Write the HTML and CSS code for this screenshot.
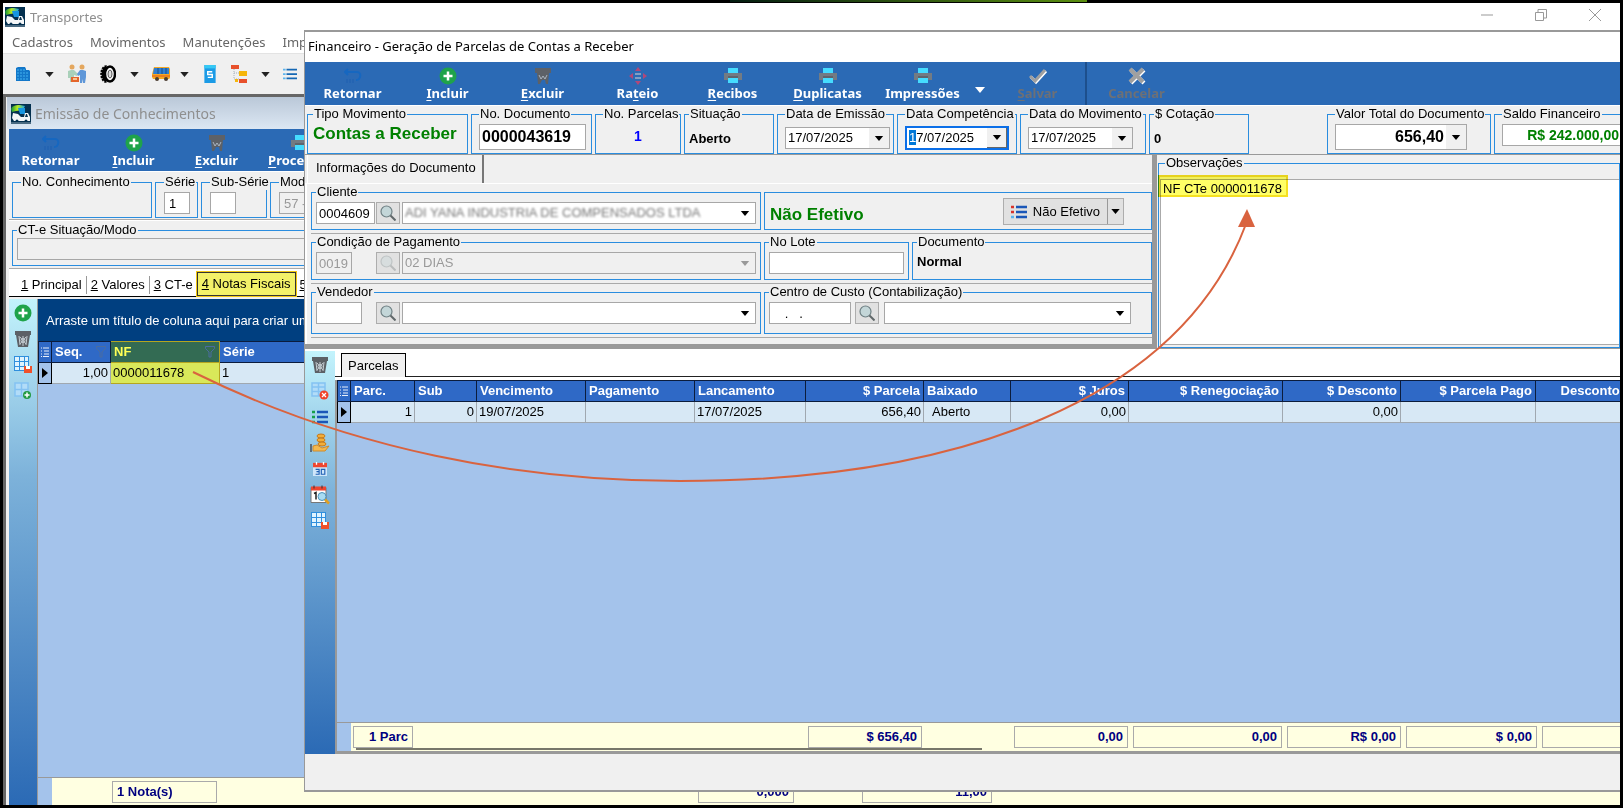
FILE: index.html
```html
<!DOCTYPE html>
<html lang="pt-BR">
<head>
<meta charset="utf-8">
<title>Transportes</title>
<link rel="stylesheet" href="styles.css">
</head>
<body>
<svg class="sprite" aria-hidden="true">
  <defs>
    <linearGradient id="globe" x1="0" y1="0" x2="1" y2="0"><stop offset="0" stop-color="#0a8f3c"/><stop offset=".45" stop-color="#b7ea1f"/><stop offset="1" stop-color="#16a3e8"/></linearGradient>
  </defs>
  <symbol id="i-app" viewBox="0 0 20 20"><rect width="20" height="20" fill="#04304f"/><path d="M0 5C1 2 4 1 9 1l5 1-2 4-7 1-4 1z" fill="url(#globe)"/><path d="M7 4h7v6H9z" fill="#1694e0"/><path d="M2 9l5 1 3 3h3l1-4h3l2 4v4H3l-2-3z" fill="#f4f6f8"/><path d="M15 10h1l1 3h-3z" fill="#04304f"/><circle cx="6" cy="17" r="1.500" fill="#04304f"/><circle cx="15" cy="17" r="1.500" fill="#04304f"/><path d="M0 19h20" stroke="#8fa3b3"/></symbol>
  <symbol id="i-caret" viewBox="0 0 10 6"><path d="M0 0h10L5 6z" fill="currentColor"/></symbol>
  <symbol id="i-building" viewBox="0 0 16 16"><path d="M1 2l2-1h7l1 2v1h3l1 1v10H1z" fill="#1377c9"/><path d="M2 4h8M2 7h12M2 10h12M2 13h12" stroke="#45b4f0" stroke-dasharray="2 1"/></symbol>
  <symbol id="i-people" viewBox="0 0 20 20"><circle cx="5" cy="3" r="2.500" fill="#e4a75e"/><circle cx="15" cy="3" r="2.500" fill="#e4a75e"/><path d="M1 14V7l3-1h3l4 4-1 2-3-1v7H3v-4z" fill="#a9d0b9"/><path d="M19 13V7l-3-1h-3l-3 4 1 2 2-1v8h2v-4l1 4h2z" fill="#5f97d8"/><rect x="4" y="13" width="8" height="5" fill="#e4652a"/><rect x="6" y="14" width="4" height="2" fill="#f7c48f"/></symbol>
  <symbol id="i-tire" viewBox="0 0 16 18"><ellipse cx="6" cy="9" rx="4.500" ry="7.500" fill="#000" stroke="#000" stroke-width="2.500" stroke-dasharray="2 1"/><ellipse cx="10" cy="9" rx="5" ry="7.500" fill="#fff" stroke="#000" stroke-width="2.500"/><ellipse cx="10" cy="9" rx="2" ry="4" fill="#ddd" stroke="#555"/></symbol>
  <symbol id="i-bus" viewBox="0 0 18 16"><path d="M2 1h15l1 2v9l-1 1H1l-1-2V8z" fill="#f6a821"/><path d="M2 2h15v6H1z" fill="#2f7ed0"/><path d="M6 2v6M10 2v6M14 2v6" stroke="#1b4c86"/><path d="M0 10h18" stroke="#e05a1c"/><circle cx="5" cy="13" r="2" fill="#4b3d30"/><circle cx="14" cy="13" r="2" fill="#4b3d30"/></symbol>
  <symbol id="i-phone" viewBox="0 0 10 16"><rect width="10" height="16" fill="#1b9be6"/><path d="M0 0h10v3H0z" fill="#36c8f4"/><path d="M7 6H3v2.500h4V11H3" fill="none" stroke="#fff" stroke-width="1.300"/></symbol>
  <symbol id="i-org" viewBox="0 0 16 18"><path d="M0 0h8v4H0z" fill="#e8512c"/><path d="M3 4v10h5M3 8h5" fill="none" stroke="#a9b2bb" stroke-dasharray="1 1"/><path d="M8 6h8v5H8z" fill="#f6b60c"/><path d="M4 14h3v3H4z" fill="#f6b60c"/><path d="M8 14h8v4H8z" fill="#e8512c"/></symbol>
  <symbol id="i-list" viewBox="0 0 16 14"><path d="M0 2h3M0 7h3M0 12h3" stroke="#5cb4ee" stroke-width="2"/><path d="M4 2h12M4 7h12M4 12h12" stroke="#1668b4" stroke-width="2"/></symbol>
  <symbol id="i-glist" viewBox="0 0 16 14"><path d="M0 2h3M0 7h3M0 12h3" stroke="#16a04a" stroke-width="2.500"/><path d="M5 2h11M5 7h11M5 12h11" stroke="#1a57b8" stroke-width="2.500"/></symbol>
  <symbol id="i-rlist" viewBox="0 0 16 14"><path d="M0 2h3M0 7h3" stroke="#d8322a" stroke-width="2.500"/><path d="M0 12h3" stroke="#5cb4ee" stroke-width="2.500"/><path d="M5 2h11M5 7h11M5 12h11" stroke="#1a57b8" stroke-width="2.500"/></symbol>
  <symbol id="i-back" viewBox="0 0 18 16"><path d="M4 1L1 4l3 3M2 4h11c5 0 4 8-1 8" fill="none" stroke="#1667c0" stroke-width="2"/><path d="M3 11v4M6 11v4M9 11v4" stroke="#1e5fb0"/></symbol>
  <symbol id="i-plus" viewBox="0 0 18 18"><circle cx="9" cy="9" r="8.500" fill="#1fa34a"/><path d="M9 4.500v9M4.500 9h9" stroke="#fff" stroke-width="2.500"/></symbol>
  <symbol id="i-trash" viewBox="0 0 18 18"><path d="M1 1h16v4h-1l-2 12H4L2 5H1z" fill="#5c6066"/><path d="M5 6l1 9M13 6l-1 9M6 7l6 7M12 7l-6 7M9 6v10" stroke="#c5cdd3"/><circle cx="9" cy="10.500" r="2" fill="none" stroke="#c5cdd3"/></symbol>
  <symbol id="i-trashd" viewBox="0 0 18 18"><path d="M1 1h16v5h-2l-1 11h-2l-1-4H8l-2 4H4L3 6H1z" fill="#5d6167"/><path d="M5 8l2 4 2-3 2 3 2-4" fill="none" stroke="#a9b4c0"/></symbol>
  <symbol id="i-move" viewBox="0 0 18 18"><path d="M9 0l3 4H6zM9 18l3-4H6zM0 9l4-3v6zM18 9l-4-3v6z" fill="#b0487a"/><path d="M6 7h6M6 11h6" stroke="#9fb0c9" stroke-width="1.500"/></symbol>
  <symbol id="i-printer" viewBox="0 0 18 16"><path d="M4 0h10v5H4z" fill="#45dcff"/><path d="M0 5h18v7H0z" fill="#737b83"/><path d="M4 10h10v5H4z" fill="#45dcff"/><path d="M4 9h10" stroke="#4a5158"/></symbol>
  <symbol id="i-check" viewBox="0 0 18 16"><path d="M2 9l5 5L17 3" fill="none" stroke="#fff" stroke-width="3"/><path d="M1 8l5 5L16 2" fill="none" stroke="#a0a0a0" stroke-width="3"/></symbol>
  <symbol id="i-cross" viewBox="0 0 18 18"><path d="M3 3l13 13M16 3L3 16" stroke="#fff" stroke-width="4"/><path d="M2 2l13 13M15 2L2 15" stroke="#a0a0a0" stroke-width="4"/></symbol>
  <symbol id="i-grid-save" viewBox="0 0 18 18"><path d="M0 0h15v15H0z" fill="#2f8fdd"/><path d="M1 1h4v4H1zM6 1h4v4H6zM11 1h3v4h-3zM1 6h4v4H1zM6 6h4v4H6zM11 6h3v4h-3zM1 11h4v3H1zM6 11h4v3H6z" fill="#dff3ff"/><path d="M10 10h8v7h-8z" fill="#f0502a"/><path d="M12 10h4v3h-4z" fill="#fff"/></symbol>
  <symbol id="i-grid-plus" viewBox="0 0 18 18"><path d="M1 1h13v13H1zM7.500 1v13M1 7.500h13" fill="#b2dcf8" stroke="#84c2f2" stroke-width="1.500"/><circle cx="13" cy="13" r="4" fill="#239a43"/><path d="M13 10.500v5M10.500 13h5" stroke="#fff" stroke-width="1.500"/></symbol>
  <symbol id="i-grid-x" viewBox="0 0 18 18"><path d="M1 1h13v13H1zM7.500 1v13M1 5h13M1 9.500h13" fill="#b2dcf8" stroke="#84c2f2" stroke-width="1.500"/><circle cx="13" cy="13" r="4.500" fill="#f0432a"/><path d="M11 11l4 4M15 11l-4 4" stroke="#fff" stroke-width="1.200"/></symbol>
  <symbol id="i-coins" viewBox="0 0 20 20"><ellipse cx="11" cy="3" rx="4" ry="2" fill="#f2ae38" stroke="#c47a1c"/><ellipse cx="11" cy="7" rx="4" ry="2" fill="#f2ae38" stroke="#c47a1c"/><ellipse cx="12" cy="11" rx="4" ry="2" fill="#f2ae38" stroke="#c47a1c"/><path d="M3 13l4-1 5 3 7-2-4 5H3z" fill="#f4b94e" stroke="#d08a2a"/><path d="M1 11v8" stroke="#5c6c7c" stroke-width="2"/></symbol>
  <symbol id="i-cal" viewBox="0 0 16 16"><path d="M0 2h16v14H0z" fill="#cfe6fa"/><path d="M0 1h16v5H0z" fill="#ee4530"/><path d="M4 0v3M12 0v3" stroke="#fff" stroke-width="1.500"/><path d="M3 8.500h4v2.500H4h3V14H3M9.500 8.500h4V14h-4z" fill="none" stroke="#1f5fb4" stroke-width="1.300"/></symbol>
  <symbol id="i-cal-find" viewBox="0 0 20 19"><path d="M1 2h15v15H1z" fill="#fff" stroke="#777"/><path d="M1 1h15v4H1z" fill="#ee4530"/><path d="M4 0v3M12 0v3" stroke="#333"/><path d="M4 8l2-1v7" fill="none" stroke="#222" stroke-width="1.500"/><circle cx="12" cy="11" r="4" fill="#a9dcf2" stroke="#4b93bd"/><path d="M15 14l4 4" stroke="#e0a020" stroke-width="2.500"/></symbol>
  <symbol id="i-find" viewBox="0 0 16 16"><circle cx="6.500" cy="6.500" r="5.500" fill="#c3d6d8" stroke="#6f8084" stroke-width="1.200"/><path d="M10.500 10.500l5 5" stroke="#60686a" stroke-width="2"/></symbol>
  <symbol id="i-rows" viewBox="0 0 8 10"><path d="M0 1h1M2 1h6M0 4h1M3 4h5M0 7h1M3 7h5M0 9.500h1M2 9.500h6" stroke="#e9f0fb"/></symbol>
  <symbol id="i-filter" viewBox="0 0 10 12"><path d="M.5.5h9v2L6 6v5H4V6L.5 2.500z" fill="none" stroke="currentColor"/></symbol>
  <symbol id="i-current" viewBox="0 0 6 10"><path d="M0 0l6 5-6 5z" fill="#000"/></symbol>
</svg>

<div class="desktop">
  <div class="glow"></div>

  <main class="main-window">
    <header class="titlebar">
      <svg class="ic20"><use href="#i-app"/></svg>
      <span>Transportes</span>
      <div class="win-buttons">
        <button aria-label="Minimizar"><svg width="14" height="14"><path d="M1 7h12" stroke="#999"/></svg></button>
        <button aria-label="Restaurar"><svg width="14" height="14"><path d="M1.500 4.500h8v8h-8zM4 4V1.500h8.500V10H10" fill="none" stroke="#999"/></svg></button>
        <button aria-label="Fechar"><svg width="14" height="14"><path d="M1 1l12 12M13 1L1 13" stroke="#999"/></svg></button>
      </div>
    </header>
    <nav class="menubar"><button>Cadastros</button><button>Movimentos</button><button>Manutenções</button><button>Impressões</button></nav>
    <div class="iconbar">
      <button class="split" aria-label="Empresas"><svg class="ic16"><use href="#i-building"/></svg><svg class="caret"><use href="#i-caret"/></svg></button>
      <button aria-label="Clientes"><svg class="ic20"><use href="#i-people"/></svg></button>
      <button class="split" aria-label="Pneus"><svg class="ic16"><use href="#i-tire"/></svg><svg class="caret"><use href="#i-caret"/></svg></button>
      <button class="split near" aria-label="Veículos"><svg class="ic18"><use href="#i-bus"/></svg><svg class="caret"><use href="#i-caret"/></svg></button>
      <button aria-label="Serviços"><svg class="ic16"><use href="#i-phone"/></svg></button>
      <button class="split" aria-label="Organização"><svg class="ic16"><use href="#i-org"/></svg><svg class="caret"><use href="#i-caret"/></svg></button>
      <button aria-label="Lista"><svg class="ic14"><use href="#i-list"/></svg></button>
    </div>

    <section class="child">
      <header class="child-title"><svg class="ic20"><use href="#i-app"/></svg><span>Emissão de Conhecimentos</span></header>
      <div class="actions compact">
        <button><svg><use href="#i-back"/></svg><span>Retornar</span></button>
        <button><svg><use href="#i-plus"/></svg><span><u>I</u>ncluir</span></button>
        <button><svg><use href="#i-trashd"/></svg><span><u>E</u>xcluir</span></button>
        <button><svg><use href="#i-printer"/></svg><span><u>P</u>rocessar</span></button>
      </div>
      <div class="doc-row">
        <fieldset class="w-conh"><legend>No. Conhecimento</legend></fieldset>
        <fieldset class="w-serie"><legend><label for="serie">Série</label></legend><input id="serie" class="box tiny" value="1"></fieldset>
        <fieldset class="w-sub"><legend><label for="sub">Sub-Série</label></legend><input id="sub" class="box tiny"></fieldset>
        <fieldset class="grow"><legend><label for="mod">Modelo</label></legend><input id="mod" class="box off" value="57 - CT-e" disabled></fieldset>
      </div>
      <div class="doc-row second">
        <fieldset class="grow flush"><legend><label for="sit">CT-e Situação/Modo</label></legend><input id="sit" class="box off fill" disabled></fieldset>
      </div>
      <div class="tabs">
        <button><u>1</u> Principal</button><button><u>2</u> Valores</button><button><u>3</u> CT-e</button><button class="marked"><u>4</u> Notas Fiscais</button><button><u>5</u> Outros</button>
      </div>
      <div class="notes">
        <div class="sidebar">
          <button aria-label="Adicionar"><svg class="ic18"><use href="#i-plus"/></svg></button>
          <button aria-label="Remover"><svg class="ic18"><use href="#i-trash"/></svg></button>
          <button aria-label="Salvar grade"><svg class="ic18"><use href="#i-grid-save"/></svg></button>
          <button aria-label="Adicionar coluna"><svg class="ic18"><use href="#i-grid-plus"/></svg></button>
        </div>
        <div class="grid-area">
          <p class="group-hint">Arraste um título de coluna aqui para criar um grupo</p>
          <table class="grid">
            <colgroup><col class="c-ind"><col class="n-seq"><col class="n-nf"><col class="n-serie"></colgroup>
            <thead><tr><th><svg class="rows"><use href="#i-rows"/></svg></th><th>Seq.<svg class="filter"><use href="#i-filter"/></svg></th><th class="nf-head">NF<svg class="filter"><use href="#i-filter"/></svg></th><th>Série</th></tr></thead>
            <tbody><tr><td class="ind"><svg><use href="#i-current"/></svg></td><td class="num">1,00</td><td class="nf-cell">0000011678</td><td>1</td></tr></tbody>
          </table>
          <div class="canvas"></div>
          <div class="totals notes-totals"><output class="t-notas">1 Nota(s)</output><output class="t-peso">0,000</output><output class="t-valor">11,00</output></div>
        </div>
      </div>
    </section>
  </main>

  <section class="dialog" role="dialog" aria-label="Geração de Parcelas">
    <header class="dialog-title">Financeiro - Geração de Parcelas de Contas a Receber</header>
    <div class="actions">
      <button><svg><use href="#i-back"/></svg><span>Retornar</span></button>
      <button><svg><use href="#i-plus"/></svg><span><u>I</u>ncluir</span></button>
      <button><svg><use href="#i-trashd"/></svg><span><u>E</u>xcluir</span></button>
      <button><svg><use href="#i-move"/></svg><span>Ra<u>t</u>eio</span></button>
      <button><svg><use href="#i-printer"/></svg><span><u>R</u>ecibos</span></button>
      <button><svg><use href="#i-printer"/></svg><span><u>D</u>uplicatas</span></button>
      <button><svg><use href="#i-printer"/></svg><span>Impressões</span></button>
      <button class="drop" aria-label="Mais impressões"><svg><use href="#i-caret"/></svg></button>
      <button disabled><svg><use href="#i-check"/></svg><span><u>S</u>alvar</span></button>
      <button class="divided" disabled><svg><use href="#i-cross"/></svg><span>Cancelar</span></button>
    </div>

    <div class="summary">
      <fieldset class="s-tipo"><legend>Tipo Movimento</legend><strong class="green big">Contas a Receber</strong></fieldset>
      <fieldset class="s-doc"><legend><label for="ndoc">No. Documento</label></legend><input id="ndoc" class="box docno" value="0000043619"></fieldset>
      <fieldset class="s-parc"><legend>No. Parcelas</legend><strong class="blue">1</strong></fieldset>
      <fieldset class="s-sit"><legend>Situação</legend><strong class="low">Aberto</strong></fieldset>
      <fieldset class="s-emi"><legend><label for="emi">Data de Emissão</label></legend><div class="combo date"><input id="emi" value="17/07/2025"><button aria-label="Abrir calendário"><svg><use href="#i-caret"/></svg></button></div></fieldset>
      <fieldset class="s-comp"><legend>Data Competência</legend><div class="combo date focus"><div class="entry" role="textbox" tabindex="0" aria-label="Data Competência"><mark>1</mark>7/07/2025</div><button aria-label="Abrir calendário"><svg><use href="#i-caret"/></svg></button></div></fieldset>
      <fieldset class="s-mov"><legend><label for="mov">Data do Movimento</label></legend><div class="combo date"><input id="mov" value="17/07/2025"><button aria-label="Abrir calendário"><svg><use href="#i-caret"/></svg></button></div></fieldset>
      <fieldset class="s-cot"><legend>$ Cotação</legend><strong class="low">0</strong></fieldset>
      <fieldset class="s-total"><legend><label for="tot">Valor Total do Documento</label></legend><div class="combo total"><input id="tot" value="656,40"><button aria-label="Abrir calculadora"><svg><use href="#i-caret"/></svg></button></div></fieldset>
      <fieldset class="s-saldo"><legend><label for="saldo">Saldo Financeiro</label></legend><input id="saldo" class="box saldo" value="R$ 242.000,00"></fieldset>
    </div>

    <div class="details">
      <div class="info">
        <div class="info-tab"><button>Informações do Documento</button></div>
        <div class="info-body">
          <div class="info-row">
            <fieldset class="f-main"><legend><label for="cli">Cliente</label></legend>
              <input id="cli" class="box code" value="0004609"><button class="find" aria-label="Buscar cliente"><svg><use href="#i-find"/></svg></button>
              <div class="combo grow"><select class="veiled" aria-label="Nome do cliente"><option>ADI YANA INDUSTRIA DE COMPENSADOS LTDA</option></select><svg class="arrow"><use href="#i-caret"/></svg></div>
            </fieldset>
            <fieldset class="grow plain"><strong class="green big">Não Efetivo</strong>
              <div class="split-button"><button><svg><use href="#i-rlist"/></svg>Não Efetivo</button><button class="more" aria-label="Opções"><svg><use href="#i-caret"/></svg></button></div>
            </fieldset>
          </div>
          <div class="info-row">
            <fieldset class="f-main"><legend><label for="cond">Condição de Pagamento</label></legend>
              <input id="cond" class="box off code short" value="0019" disabled><button class="find off" aria-label="Buscar condição" disabled><svg><use href="#i-find"/></svg></button>
              <div class="combo off grow"><select aria-label="Condição" disabled><option>02 DIAS</option></select><svg class="arrow"><use href="#i-caret"/></svg></div>
            </fieldset>
            <fieldset class="f-lote"><legend><label for="lote">No Lote</label></legend><input id="lote" class="box fill"></fieldset>
            <fieldset class="grow f-docu"><legend>Documento</legend><strong>Normal</strong></fieldset>
          </div>
          <div class="info-row last">
            <fieldset class="f-main"><legend><label for="vend">Vendedor</label></legend>
              <input id="vend" class="box code seller"><button class="find" aria-label="Buscar vendedor"><svg><use href="#i-find"/></svg></button>
              <div class="combo grow"><select aria-label="Nome do vendedor"><option></option></select><svg class="arrow"><use href="#i-caret"/></svg></div>
            </fieldset>
            <fieldset class="grow f-custo"><legend><label for="custo">Centro de Custo (Contabilização)</label></legend>
              <input id="custo" class="box cost" value="   .   ."><button class="find" aria-label="Buscar centro de custo"><svg><use href="#i-find"/></svg></button>
              <div class="combo grow"><select aria-label="Centro de custo"><option></option></select><svg class="arrow"><use href="#i-caret"/></svg></div>
            </fieldset>
          </div>
        </div>
      </div>
      <fieldset class="notes-box"><legend><label for="obs">Observações</label></legend><textarea id="obs">NF CTe 0000011678</textarea><span class="highlight"></span></fieldset>
    </div>

    <div class="parcels">
      <div class="sidebar">
        <button aria-label="Remover"><svg class="ic18"><use href="#i-trash"/></svg></button>
        <button aria-label="Excluir coluna"><svg class="ic18"><use href="#i-grid-x"/></svg></button>
        <button aria-label="Lista"><svg class="ic16"><use href="#i-glist"/></svg></button>
        <button aria-label="Baixar"><svg class="ic20"><use href="#i-coins"/></svg></button>
        <button aria-label="Vencimentos"><svg class="ic14"><use href="#i-cal"/></svg></button>
        <button aria-label="Pesquisar datas"><svg class="ic20"><use href="#i-cal-find"/></svg></button>
        <button aria-label="Salvar grade"><svg class="ic18"><use href="#i-grid-save"/></svg></button>
      </div>
      <div class="parcel-area">
        <div class="parcel-tabs"><button>Parcelas</button></div>
        <div class="grid-area">
          <table class="grid wide">
            <colgroup><col class="c-ind"><col class="p-parc"><col class="p-sub"><col class="p-date"><col class="p-date"><col class="p-lanc"><col class="p-val"><col class="p-bx"><col class="p-juros"><col class="p-ren"><col class="p-desc"><col class="p-pago"><col class="p-last"></colgroup>
            <thead><tr><th><svg class="rows"><use href="#i-rows"/></svg></th><th>Parc.</th><th>Sub</th><th>Vencimento</th><th>Pagamento</th><th>Lancamento</th><th class="num">$ Parcela</th><th>Baixado</th><th class="num">$ Juros</th><th class="num">$ Renegociação</th><th class="num">$ Desconto</th><th class="num">$ Parcela Pago</th><th class="num">Desconto Pg</th></tr></thead>
            <tbody><tr><td class="ind"><svg><use href="#i-current"/></svg></td><td class="num">1</td><td class="num">0</td><td>19/07/2025</td><td></td><td>17/07/2025</td><td class="num">656,40</td><td class="inset">Aberto</td><td class="num">0,00</td><td></td><td class="num">0,00</td><td></td><td></td></tr></tbody>
          </table>
          <div class="canvas"></div>
          <div class="totals parcel-totals"><output>1 Parc</output><output>$ 656,40</output><output>0,00</output><output>0,00</output><output>R$ 0,00</output><output>$ 0,00</output><output></output><i class="scroll-shadow"></i></div>
        </div>
      </div>
    </div>
    <footer class="status"></footer>
  </section>

  <svg class="link-arrow" aria-hidden="true"><path d="M193 372C350 450 520 481 680 481C960 481 1180 400 1246 224" fill="none" stroke="#d9633f" stroke-width="2"/><path d="M1247 209l8 18h-17z" fill="#d9633f"/></svg>
</div>
</body>
</html>
```
FILE: styles.css
```css
* { box-sizing: border-box; }
body { margin: 0; background: #000; color: #000; font: 13px/16px "Liberation Sans", Arial, sans-serif; }
button, input, select, textarea { font: inherit; color: inherit; margin: 0; border-radius: 0; }
button { background: none; border: 0; padding: 0; white-space: nowrap; }
svg { display: block; flex: none; }
.sprite { position: absolute; width: 0; height: 0; }
.grow { flex: 1; min-width: 0; }
.ic14 { width: 14px; height: 14px; }
.ic16 { width: 16px; height: 18px; }
.ic18 { width: 18px; height: 18px; }
.ic20 { width: 20px; height: 20px; }

.desktop { position: relative; height: 100vh; padding: 3px; overflow: hidden; }
.glow { position: absolute; top: 0; left: 45%; width: 22%; height: 2px; background: linear-gradient(90deg, #031c10, #5b8f10); }

/* Main window */
.main-window { height: 100%; display: flex; flex-direction: column; background: #fff; overflow: hidden; }
.titlebar, .child-title { display: flex; align-items: center; color: #8f8f8f; font: 13px/20px "Noto Sans", "Open Sans", sans-serif; }
.titlebar { height: 27px; padding-left: 2px; gap: 5px; flex: none; }
.win-buttons { margin-left: auto; margin-bottom: 3px; padding-right: 18px; display: flex; gap: 40px; }
.menubar { display: flex; gap: 17px; height: 23px; padding-left: 9px; flex: none; font: 13px/20px "Noto Sans", "Open Sans", sans-serif; color: #666; }
.iconbar { display: flex; align-items: center; height: 41px; flex: none; padding-left: 12px; gap: 13px; background: #f0f0f0; border-top: 1px solid #e3e3e3; }
.iconbar .split { display: flex; align-items: center; gap: 14px; }
.iconbar .near { gap: 10px; }
.iconbar .caret { width: 9px; height: 5px; color: #222; }

.child { flex: 1; min-height: 0; display: flex; flex-direction: column; border: solid #666; border-width: 3px 0 0 3px; padding-left: 3px; background: #f0f0f0; }
.child-title { height: 32px; flex: none; margin-left: -2px; padding: 2px 0 0 4px; gap: 4px; background: linear-gradient(#bac8d8, #dce7f3); font-size: 14px; }

/* Blue action bars */
.actions { display: flex; height: 43px; flex: none; background: #2b6ab5; color: #fff; font: bold 13px/16px "Noto Sans", "Open Sans", sans-serif; }
.actions button { width: 95px; display: flex; flex-direction: column; align-items: center; padding-top: 5px; flex: none; }
.actions svg { width: 18px; height: 18px; }
.actions button:disabled { color: #6d7076; }
.actions .drop { width: 20px; padding-top: 25px; }
.actions .drop svg { width: 10px; height: 6px; }
.actions .divided { width: 101px; border-left: 2px solid #1d4f8c; }
.actions u { text-underline-offset: 2px; }
.compact { height: 42px; }
.compact button { width: 83px; }

fieldset { display: flex; align-items: flex-start; margin: 0; min-width: 0; padding: 2px 8px; border: 1px solid #2a8ddf; height: 46px; }
legend { padding: 0 1px; height: 16px; white-space: nowrap; }

.doc-row { display: flex; gap: 3px; padding: 2px 0 0 3px; height: 49px; flex: none; border-bottom: 1px solid #aaa; border-top: 1px solid #fff; }
.doc-row fieldset { height: 44px; }
.doc-row.second { padding-top: 1px; }
.w-conh { width: 140px; } .w-serie { width: 43px; } .w-sub { width: 66px; }
.doc-row .flush { padding: 0 4px; }
.box { height: 22px; padding: 0 4px; background: #fff; border: 1px solid #a7a7a7; outline: 0; }
.tiny { width: 26px; }
.fill { width: 100%; }
.off { background: #f0f0f0; color: #999; }

.tabs { display: flex; height: 28px; flex: none; padding: 3px 0 0 12px; background: #fff; border-bottom: 1px solid #000; white-space: nowrap; }
.tabs button { padding-right: 4px; margin-right: 4px; height: 18px; margin-top: 4px; border-right: 1px solid #999; }
.tabs button:nth-child(3) { border: 0; margin-right: 0; }
.tabs .marked { height: 24px; margin-top: 0; padding: 0 4px; background: #f3f169; border: 1px solid #333; outline: 1px solid #f2c811; }

.notes { display: flex; flex: 1; min-height: 0; margin-top: 2px; }
.sidebar { width: 28px; flex: none; display: flex; flex-direction: column; align-items: center; gap: 8px; padding-top: 5px; background: linear-gradient(#c3f3fc, #7db2da 35%, #2b6ab5); }
.sidebar button { height: 18px; display: flex; align-items: center; justify-content: center; }
.grid-area { flex: 1; min-width: 0; min-height: 0; display: flex; flex-direction: column; overflow: hidden; border-left: 1px solid #999; }
.group-hint { margin: 0; padding: 14px 8px 12px; height: 42px; background: #003f80; color: #fff; white-space: nowrap; }
.canvas { flex: 1; background: #a4c3eb; }

/* Grids */
.grid { table-layout: fixed; width: 100%; border-collapse: collapse; background: #d7e8f5; }
.grid tr { height: 21px; }
.grid th { position: relative; padding: 0 3px; text-align: left; color: #fff; background: #2f69c6; border: 1px solid #0b1c3c; overflow: hidden; white-space: nowrap; }
.grid td { padding: 0 2px; border: 1px solid #a0a8b0; white-space: nowrap; }
.grid .ind { padding: 0 3px; background: #a4c3eb; border: 1px solid #000; }
.ind svg { width: 6px; height: 10px; }
.grid .num { text-align: right; }
.grid .inset { padding-left: 8px; }
.rows { width: 8px; height: 10px; margin-left: -1px; }
.filter { position: absolute; right: 4px; top: 4px; width: 10px; height: 12px; color: #4a6ca0; }
.c-ind { width: 13px; } .n-seq { width: 59px; } .n-nf { width: 109px; }
.grid .nf-head { background: #336b53; color: #ffff55; border: 1px solid #b5a520; }
.grid .nf-cell { background: #d9e85a; border: 1px solid #b5a520; }
.wide { width: 1307px; }
.p-parc { width: 64px; } .p-sub { width: 62px; } .p-date { width: 109px; } .p-lanc { width: 111px; } .p-val { width: 118px; } .p-bx { width: 87px; }
.p-juros { width: 118px; } .p-ren { width: 154px; } .p-desc { width: 118px; } .p-pago { width: 135px; }

.totals { position: relative; display: grid; flex: none; height: 28px; padding-top: 3px; background: linear-gradient(90deg, #a4c3eb 14px, #ffffe1 14px); border-top: 1px solid #999; color: #000080; font-weight: bold; }
.totals output { height: 22px; padding: 0 4px; line-height: 20px; border: 1px solid #aaa; white-space: nowrap; text-align: right; }
.notes-totals { grid-template-columns: 105px 345px 96px 130px; column-gap: 68px; padding-left: 74px; }
.totals .t-notas { text-align: left; }
.t-peso { grid-column: 3; }

/* Dialog */
.dialog { position: absolute; left: 304px; right: 3px; top: 30px; bottom: 16px; display: flex; flex-direction: column; background: #f0f0f0; border: solid #999; border-width: 2px 0 2px 1px; overflow: hidden; }
.dialog-title { height: 30px; padding: 4px 3px; flex: none; background: #fff; font: 13px/20px "Noto Sans", "Open Sans", sans-serif; }
.summary { display: flex; gap: 3px; height: 50px; flex: none; padding: 0 0 0 2px; border-top: 1px solid #fff; border-bottom: 1px solid #999; }
.summary fieldset { height: 48px; flex: none; padding: 2px 7px; }
.s-tipo { width: 161px; } .s-doc { width: 121px; } .s-parc { width: 86px; } .s-sit { width: 90px; } .s-emi { width: 117px; }
.s-comp { width: 120px; } .s-mov { width: 126px; } .s-cot { width: 100px; } .s-total { width: 164px; margin-left: 75px; } .s-saldo { width: 180px; }
.summary .s-tipo { padding: 2px 5px; }
.summary .s-sit, .summary .s-cot { padding: 2px 4px; }
.green { color: #008000; }
.big { font-size: 17px; line-height: 20px; }
.blue { color: #00f; margin: 4px auto; font-size: 14px; }
.low { margin-top: 7px; }
.docno { width: 107px; height: 26px; padding: 0 2px; font-weight: bold; font-size: 16px; }
.saldo { width: 122px; text-align: right; color: #008000; font-weight: bold; font-size: 14px; }
.combo { display: flex; align-items: center; height: 22px; background: #fff; border: 1px solid #a7a7a7; }
.combo input, .combo select, .entry { appearance: none; flex: 1; min-width: 0; height: 20px; padding: 0 2px; line-height: 20px; background: none; border: 0; outline: 0; opacity: 1; }
.combo button { align-self: stretch; width: 20px; display: flex; align-items: center; justify-content: center; background: #f0f0f0; }
.combo svg, .more svg { width: 10px; height: 5px; }
.combo .arrow { margin: 0 5px; }
.combo.off { background: #f0f0f0; color: #999; }
.date { width: 105px; margin-top: 3px; }
.focus { border: 2px solid #0b6fe8; height: 24px; margin-top: 2px; }
.focus button { border-right: 1px solid #666; border-bottom: 1px solid #666; }
.entry mark { background: #0078d7; color: #fff; }
.total { width: 132px; height: 26px; font-weight: bold; }
.total input { text-align: right; font-size: 16px; }

.details { display: grid; grid-template-columns: 852px 1fr; flex: none; border-bottom: 1px solid #999; }
.info { display: flex; flex-direction: column; border: solid #999; border-width: 0 5px 4px 0; }
.info-tab { height: 28px; padding-left: 2px; display: flex; background: #f0f0f0; }
.info-tab button { padding: 0 6px 3px 8px; border-left: 1px solid #fff; border-right: 2px solid #777; }
.info-body { padding-left: 4px; border-top: 1px solid #fff; border-left: 2px solid #fff; padding-bottom: 6px; }
.info-row { display: flex; gap: 3px; padding: 0 0 3px; border-bottom: 1px solid #aaa; }
.info-row fieldset { padding: 2px 4px; }
.f-main { width: 450px; }
.info-row .plain { margin-top: 8px; height: 38px; padding: 5px 27px 0 5px; }
.plain strong { margin-top: 7px; }
.info-row.last fieldset { height: 50px; }
.code { width: 59px; margin-right: 1px; padding: 0 2px; }
.info-row .short { width: 36px; margin-right: 24px; }
.seller { width: 46px; margin-right: 14px; }
.find { width: 24px; height: 22px; flex: none; margin-right: 2px; display: flex; align-items: center; justify-content: center; background: #e1e1e1; border: 1px solid #adadad; }
.find svg { width: 16px; height: 16px; }
.find.off svg { opacity: .3; }
.veiled { filter: blur(1px); color: #777; }
.f-lote { width: 145px; }
.f-docu strong { margin-top: 2px; }
.info-row .f-custo { padding-right: 20px; }
.cost { width: 82px; margin-right: 4px; white-space: pre; }
.f-custo .find { margin-right: 5px; }
.split-button { display: flex; height: 27px; margin-left: auto; background: #e1e1e1; border: 1px solid #adadad; }
.split-button button { display: flex; align-items: center; gap: 6px; padding: 0 7px; }
.split-button button svg { width: 16px; height: 14px; }
.split-button .more { width: 16px; padding: 0 3px; border-left: 1px solid #999; }
.split-button .more svg { width: 9px; height: 5px; }
.notes-box { position: relative; margin-left: 1px; height: auto; padding: 8px 0 2px 1px; }
.notes-box legend { margin-left: 5px; }
.notes-box textarea { flex: 1; align-self: stretch; padding: 1px 2px; border: 1px solid #aaa; border-right: 0; background: #fff; resize: none; outline: 0; overflow: hidden; }
.highlight { position: absolute; left: -1px; top: 4px; width: 130px; height: 22px; background: #ffff66; border: 2px solid #f5e020; mix-blend-mode: multiply; }

.parcels { flex: 1; min-height: 0; display: flex; padding: 2px 0 0; background: #fff; }
.parcels .sidebar { width: 30px; }
.parcel-area { flex: 1; min-width: 0; display: flex; flex-direction: column; }
.parcel-tabs { height: 26px; flex: none; display: flex; padding: 2px 0 0 6px; border-bottom: 1px solid #222; }
.parcel-tabs button { padding: 0 6px; height: 24px; background: #f0f0f0; border: 1px solid #000; border-bottom: 0; }
.parcel-area .grid-area { margin-top: 3px; border-left: 2px solid #999; border-bottom: 3px solid #999; }
.parcel-totals { height: 29px; padding-left: 16px; grid-template-columns: 60px 385px 114px 82px 114px 149px 114px 131px 130px; column-gap: 5px; }
.parcel-totals output:nth-child(2) { grid-column: 3; }
.parcel-totals output:nth-child(3) { grid-column: 5; }
.scroll-shadow { position: absolute; left: 19px; bottom: 1px; width: 626px; height: 2px; background: #77776a; }
.status { height: 36px; flex: none; }

.link-arrow { position: absolute; inset: 0; width: 100%; height: 100%; pointer-events: none; }
```
